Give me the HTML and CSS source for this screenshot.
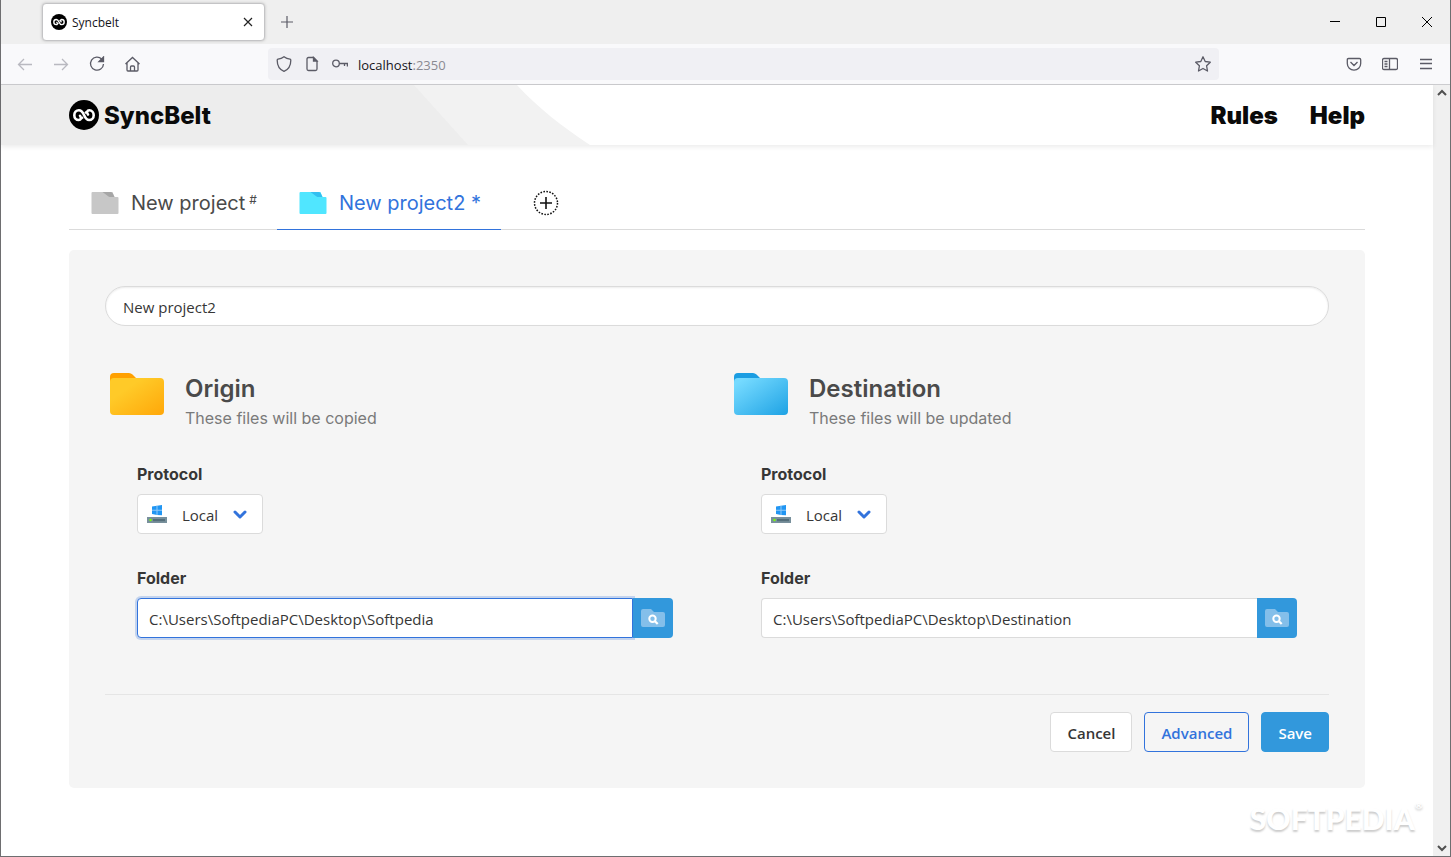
FILE: index.html
```html
<!DOCTYPE html>
<html lang="en">
<head>
<meta charset="utf-8">
<title>Syncbelt</title>
<link rel="stylesheet" href="styles.css">
</head>
<body>
<svg class="defs" aria-hidden="true">
  <defs>
    <linearGradient id="amber" x1="0" y1="0" x2="1" y2="1"><stop offset=".3" stop-color="#ffca28"/><stop offset="1" stop-color="#ffa709"/></linearGradient>
    <linearGradient id="azure" x1="0" y1="0" x2="1" y2="1"><stop offset=".1" stop-color="#75daff"/><stop offset="1" stop-color="#1ea2e4"/></linearGradient>
    <symbol id="logo" viewBox="0 0 30 30">
      <circle cx="15" cy="15" r="15" fill="#000"/>
      <path d="M11 15.800C13 18.500 11.500 20 9.800 20C7 20 5.300 17.800 5.300 15.200C5.300 12.500 7.200 10.300 9.900 10.300C12.300 10.300 13.600 12 15 15C16.400 18.300 17.700 20 20.100 20C22.800 20 24.700 17.800 24.700 15.200C24.700 12.500 23 10.300 20.200 10.300C18.500 10.300 17 12 19 14.500" fill="none" stroke="#fff" stroke-width="2.600" stroke-linecap="round"/>
      <path d="M12.500 18.500L14 17.200M17.500 11.800L16 13.200" stroke="#fff" stroke-width="2.200"/>
    </symbol>
    <symbol id="drive" viewBox="0 0 20 18">
      <path d="M5 1.500l5-.8V10l-5-.9zM10 .700L15 0v10.300L10 10z" fill="#2196f3"/>
      <path d="M9.500.800h1V10h-1zM5 4.700h10v1H5z" fill="#90caf9"/>
      <path d="M0 12h20v6H0z" fill="#78909c"/>
      <path d="M6 14h12v2.200H6z" fill="#546e7a"/>
      <circle cx="3.500" cy="15" r="1.200" fill="#76ff03"/>
    </symbol>
    <symbol id="chevron" viewBox="0 0 14 9"><path d="M2 2l5 5 5-5" fill="none" stroke="#3273dc" stroke-width="3" stroke-linecap="round" stroke-linejoin="round"/></symbol>
    <symbol id="browse" viewBox="0 0 24 18">
      <path d="M0 2Q0 0 2 0h8l3 3h9q2 0 2 2v11q0 2-2 2H2q-2 0-2-2z" fill="#84bfea"/>
      <circle cx="11.500" cy="9.800" r="3.200" fill="none" stroke="#fff" stroke-width="2"/><path d="M13.700 12l3 3" stroke="#fff" stroke-width="2.200"/>
    </symbol>
  </defs>
</svg>
<div class="window">
  <div class="titlebar">
    <div class="browser-tab">
      <svg class="s16"><use href="#logo"/></svg>
      <span class="browser-tab-title">Syncbelt</span>
      <button class="ghost" aria-label="Close tab"><svg class="s10" viewBox="0 0 10 10"><path d="M1 1l8 8M9 1L1 9" stroke="#222" stroke-width="1.200"/></svg></button>
    </div>
    <button class="ghost new-tab" aria-label="New tab"><svg class="s12" viewBox="0 0 12 12"><path d="M6 0v12M0 6h12" stroke="#5b5b66" stroke-width="1.200"/></svg></button>
    <div class="window-controls">
      <button class="ghost" aria-label="Minimize"><svg class="s10" viewBox="0 0 10 10"><path d="M0 4.500h10" stroke="#000"/></svg></button>
      <button class="ghost" aria-label="Maximize"><svg class="s10" viewBox="0 0 10 10"><path d="M.5.500h9v9h-9z" fill="none" stroke="#000"/></svg></button>
      <button class="ghost" aria-label="Close"><svg class="s10" viewBox="0 0 10 10"><path d="M0 0l10 10M10 0L0 10" stroke="#000"/></svg></button>
    </div>
  </div>
  <div class="toolbar">
    <div class="nav-buttons">
      <button class="ghost" aria-label="Back"><svg class="s16 icon faded" viewBox="0 0 16 16"><path d="M15 8.500H1.500M7 3L1.500 8.500 7 14"/></svg></button>
      <button class="ghost" aria-label="Forward"><svg class="s16 icon faded" viewBox="0 0 16 16"><path d="M1 8.500h13.500M9 3l5.500 5.500L9 14"/></svg></button>
      <button class="ghost" aria-label="Reload"><svg class="s16 icon" viewBox="0 0 16 16"><path d="M12.800 3.300A6.500 6.500 0 1 0 14.500 8"/><path d="M14.500 1v4.500H10z" fill="#5b5b66"/></svg></button>
      <button class="ghost" aria-label="Home"><svg class="s16 icon" viewBox="0 0 16 16"><path d="M.5 8l7-6.500 7 6.500M2 7v7q0 1 1 1h9q1 0 1-1V7M5.500 15v-4q0-1 1-1h2q1 0 1 1v4"/></svg></button>
    </div>
    <div class="address">
      <svg class="s16 icon" viewBox="0 0 16 16"><path d="M8 .7c2 1.500 4 2.200 6 2.500q.8.200.8 1C14.800 9 12.500 13.500 8 15.300 3.500 13.500 1.200 9 1.200 4.200q0-.8.800-1C4 2.900 6 2.200 8 .7z"/></svg>
      <svg class="s16 icon" viewBox="0 0 16 16"><path d="M9.500 1.500h-5q-1.500 0-1.500 1.500v10q0 1.500 1.500 1.500h7q1.500 0 1.500-1.500V5z"/><path d="M9.500 1.500V5H13z" fill="#5b5b66"/></svg>
      <svg class="s16 icon" viewBox="0 0 16 16"><circle cx="4" cy="7.500" r="3.300"/><path d="M7.300 7.500H15.400V10.500M12.500 7.500v2.500"/></svg>
      <span class="url">localhost<span class="port">:2350</span></span>
      <button class="ghost" aria-label="Bookmark"><svg class="s16 icon" viewBox="0 0 16 16"><path d="M8 .8l2.200 4.700 5.100.7-3.700 3.600.9 5.200L8 12.500 3.500 15l.9-5.200L.7 6.200l5.100-.7z" stroke-linejoin="round"/></svg></button>
    </div>
    <div class="tool-buttons">
      <button class="ghost" aria-label="Pocket"><svg class="s16 icon" viewBox="0 0 16 16"><path d="M2.500 2.500h11q1.200 0 1.200 1.200V7.500a6.700 6.700 0 0 1-13.400 0V3.700q0-1.200 1.200-1.200zM4.500 6l3.500 3.500L11.500 6"/></svg></button>
      <button class="ghost" aria-label="Sidebar"><svg class="s16 icon" viewBox="0 0 16 16"><path d="M2 2.500h12q1.500 0 1.500 1.500v8q0 1.500-1.500 1.500H2Q.5 13.500.5 12V4Q.5 2.500 2 2.500zM7.500 2.500v11M2.500 5.500h3M2.500 8h3M2.500 10.500h3"/></svg></button>
      <button class="ghost" aria-label="Menu"><svg class="s16 icon" viewBox="0 0 16 16"><path d="M2 3.500h12M2 7.500h12M2 12.500h12"/></svg></button>
    </div>
  </div>
  <div class="viewport">
    <div class="page">
      <header class="site-header">
        <svg class="swoosh" viewBox="0 0 590 60" preserveAspectRatio="none" aria-hidden="true"><path d="M0 0H516C537 23 562 42 589 60H0z" fill="#f2f2f2"/><path d="M0 0H413L467 60H0z" fill="#ededed"/></svg>
        <a class="brand" href="#"><svg class="s30"><use href="#logo"/></svg><span>SyncBelt</span></a>
        <nav class="site-nav"><a href="#">Rules</a><a href="#">Help</a></nav>
      </header>
      <main class="container">
        <nav class="tabs">
          <a class="tab" href="#"><svg class="tab-icon" viewBox="0 0 27 22"><path d="M1 0h20l2 5h3q1 0 1 1v15q0 1-1 1H1q-1 0-1-1V1q0-1 1-1z" fill="#c7c7c7"/><path d="M11 0h8q1 0 2 1l2 4h-4q-1 0-2-.5z" fill="#a6a6a6"/></svg><span>New project<sup>#</sup></span></a>
          <a class="tab active" href="#"><svg class="tab-icon" viewBox="0 0 27 22"><path d="M1 0h20l2 5h3q1 0 1 1v15q0 1-1 1H1q-1 0-1-1V1q0-1 1-1z" fill="#50e6ff"/><path d="M11 0h8q1 0 2 1l2 4h-4q-1 0-2-.5z" fill="#32bff0"/></svg><span>New project2 *</span></a>
          <button class="ghost add-tab" aria-label="Add project"><svg class="s26" viewBox="0 0 26 26" fill="none" stroke="#111"><circle cx="13" cy="13" r="11.500" stroke-width="1.500" stroke-dasharray="1.600 1.411"/><path d="M13 7v12M7 13h12" stroke-width="1.600"/></svg></button>
        </nav>
        <form class="panel">
          <input class="name-field" type="text" aria-label="Project name" value="New project2">
          <div class="columns">
            <section>
              <div class="section-head">
                <svg class="folder-icon" viewBox="0 0 56 44"><path d="M1 20V5q0-4 4-4h15q2 0 3.500 1.500L28 7v13z" fill="#ffa000"/><rect x="1" y="6" width="54" height="37" rx="4" fill="url(#amber)"/></svg>
                <div><h2>Origin</h2><p>These files will be copied</p></div>
              </div>
              <div class="fields">
                <div class="field"><label for="p1">Protocol</label>
                  <div class="picker"><svg class="drive"><use href="#drive"/></svg><select id="p1"><option>Local</option></select><svg class="chevron"><use href="#chevron"/></svg></div></div>
                <div class="field"><label for="f1">Folder</label>
                  <div class="addon"><input class="focused" id="f1" type="text" value="C:\Users\SoftpediaPC\Desktop\Softpedia"><button type="button" aria-label="Browse origin"><svg class="browse"><use href="#browse"/></svg></button></div></div>
              </div>
            </section>
            <section>
              <div class="section-head">
                <svg class="folder-icon" viewBox="0 0 56 44"><path d="M1 20V5q0-4 4-4h15q2 0 3.500 1.500L28 7v13z" fill="#1b9de2"/><rect x="1" y="6" width="54" height="37" rx="4" fill="url(#azure)"/></svg>
                <div><h2>Destination</h2><p>These files will be updated</p></div>
              </div>
              <div class="fields">
                <div class="field"><label for="p2">Protocol</label>
                  <div class="picker"><svg class="drive"><use href="#drive"/></svg><select id="p2"><option>Local</option></select><svg class="chevron"><use href="#chevron"/></svg></div></div>
                <div class="field"><label for="f2">Folder</label>
                  <div class="addon"><input id="f2" type="text" value="C:\Users\SoftpediaPC\Desktop\Destination"><button type="button" aria-label="Browse destination"><svg class="browse"><use href="#browse"/></svg></button></div></div>
              </div>
            </section>
          </div>
          <div class="actions">
            <button class="button" type="button">Cancel</button>
            <button class="button outlined" type="button">Advanced</button>
            <button class="button primary" type="button">Save</button>
          </div>
        </form>
      </main>
      <div class="watermark">SOFTPEDIA<sup>®</sup></div>
    </div>
    <div class="scrollbar" aria-hidden="true">
      <svg class="s10" viewBox="0 0 10 10"><path d="M1 7l4-4 4 4" fill="none" stroke="#505050" stroke-width="2"/></svg>
      <svg class="s10" viewBox="0 0 10 10"><path d="M1 3l4 4 4-4" fill="none" stroke="#505050" stroke-width="2"/></svg>
    </div>
  </div>
</div>
</body>
</html>
```
FILE: styles.css
```css
*, *::before, *::after { box-sizing: border-box; }
body { margin: 0; font-family: Inter, sans-serif; font-size: 16px; line-height: 24px; color: #363636; background: #fff; }
svg { display: block; flex: none; }
button, input, select { font: inherit; color: inherit; margin: 0; }
a { color: inherit; text-decoration: none; }
h2, p { margin: 0; }
.defs { position: absolute; width: 0; height: 0; }
.s10 { width: 10px; height: 10px; }
.s12 { width: 12px; height: 12px; }
.s16 { width: 16px; height: 16px; }
.s26 { width: 26px; height: 26px; }
.s30 { width: 30px; height: 30px; }
.ghost { border: 0; padding: 0; background: none; display: grid; place-items: center; }
.icon { fill: none; stroke: #5b5b66; stroke-width: 1.3; }
.faded { stroke: #b9b9c0; }

.window { min-height: 100vh; display: flex; flex-direction: column; border: solid #6e6e70; border-width: 0 1px 1px; }
.titlebar { height: 44px; background: #efefef; display: flex; align-items: center; padding-left: 41px; font: 12px/16px "Open Sans", sans-serif; }
.browser-tab { width: 223px; height: 38px; padding: 0 11px 0 8px; display: flex; align-items: center; gap: 5px; background: #fff; border: 1px solid #c4c4c6; border-radius: 4px; box-shadow: 0 0 3px #bbb; color: #15141a; }
.browser-tab-title { flex: 1; padding-top: 1px; }
.new-tab { margin-left: 16px; }
.window-controls { margin-left: auto; display: flex; gap: 36px; padding-right: 18px; }
.toolbar { height: 41px; background: #f9f9fb; border-bottom: 1px solid #cccccf; display: flex; align-items: center; }
.nav-buttons { display: flex; gap: 20px; padding-left: 16px; width: 267px; }
.address { flex: 1; height: 32px; display: flex; align-items: center; gap: 12px; padding: 0 8px; background: #f0f0f4; border-radius: 4px; font: 13px/20px "Open Sans", sans-serif; color: #15141a; }
.url { flex: 1; margin-left: -2px; padding-top: 1px; }
.port { color: #8a8a92; }
.tool-buttons { display: flex; gap: 20px; padding: 0 16px 0 127px; }

.viewport { flex: 1; display: flex; }
.page { flex: 1; min-width: 0; position: relative; }
.scrollbar { width: 17px; background: #f0f0f0; display: flex; flex-direction: column; align-items: center; justify-content: space-between; padding: 3px 0; }
.site-header { position: relative; height: 60px; padding: 0 68px; display: flex; align-items: center; justify-content: space-between; box-shadow: 0 2px 5px rgba(0,0,0,.08); font-size: 24px; font-weight: 900; line-height: 32px; color: #0a0a0a; }
.swoosh { position: absolute; left: 0; top: 0; width: 590px; height: 100%; }
.brand { position: relative; display: flex; align-items: center; gap: 5px; font-weight: 800; }
.brand span, .site-nav { padding-top: 2px; }
.site-nav { display: flex; gap: 32px; }

.container { padding: 32px 68px 68px; }
.tabs { display: flex; border-bottom: 1px solid #dbdbdb; font-size: 20px; line-height: 28px; color: #4a4a4a; }
.tab { height: 53px; display: flex; align-items: center; gap: 12px; padding: 0 20px 0 22px; margin-bottom: -1px; border-bottom: 1px solid transparent; }
.tab sup { font-size: 12px; line-height: 12px; margin-left: 4px; vertical-align: 6px; }
.tab.active { color: #3273dc; border-color: #3273dc; }
.tab-icon { width: 28px; height: 22px; }
.add-tab { margin-left: 32px; }
.panel { margin-top: 20px; padding: 36px; background: #f5f5f5; border-radius: 5px; }
input, select { font-family: "Open Sans", sans-serif; font-size: 15px; height: 40px; border: 1px solid #dbdbdb; border-radius: 4px; background: #fff; outline: 0; padding: 2px 11px 0; }
.name-field { display: block; width: 100%; border-radius: 20px; padding: 2px 17px 0; box-shadow: inset 0 1px 2px rgba(10,10,10,.08); }
.columns { display: grid; grid-template-columns: 1fr 1fr; gap: 24px; margin-top: 44px; }
.section-head { display: flex; gap: 20px; padding-left: 4px; }
.section-head > div { padding-top: 4px; }
.folder-icon { width: 56px; height: 44px; margin-top: 2px; }
h2 { font-size: 24px; line-height: 30px; font-weight: 600; color: #4a4a4a; }
.section-head p { color: #7a7a7a; margin-top: 2px; }
.fields { display: grid; gap: 32px; margin-top: 32px; padding: 0 32px; }
.field { display: grid; grid-template-columns: 100%; gap: 8px; justify-items: start; }
.field label { font-weight: 700; }
.picker { position: relative; }
.picker select { width: 126px; appearance: none; padding-left: 44px; }
.drive { position: absolute; left: 10px; top: 11px; width: 20px; height: 18px; pointer-events: none; }
.chevron { position: absolute; right: 16px; top: 16px; width: 14px; height: 9px; pointer-events: none; }
.addon { display: flex; width: 100%; }
.addon input { flex: 1; min-width: 0; border-radius: 4px 0 0 4px; border-right: 0; }
.addon .focused { border: 1px solid #3273dc; box-shadow: 0 0 0 2px rgba(50,115,220,.25); }
.addon button { width: 40px; border: 0; padding: 0; background: #3298dc; border-radius: 0 4px 4px 0; display: grid; place-items: center; }
.browse { width: 24px; height: 18px; }
.actions { display: flex; justify-content: flex-end; gap: 12px; margin-top: 56px; padding-top: 17px; border-top: 1px solid #e5e5e5; }
.button { height: 40px; padding: 2px 16px 0; font: 600 15px/24px "Open Sans", sans-serif; background: #fff; border: 1px solid #dbdbdb; border-radius: 4px; }
.outlined { background: transparent; color: #3273dc; border-color: #3273dc; }
.primary { color: #fff; background: #3298dc; border-color: #3298dc; }
.watermark { position: absolute; right: 10px; bottom: 20px; font: 900 30px/36px Lato, sans-serif; color: #fff; text-shadow: 0 2px 2px #ccc; display: flex; }
.watermark sup { font-size: 10px; line-height: 10px; }
```
